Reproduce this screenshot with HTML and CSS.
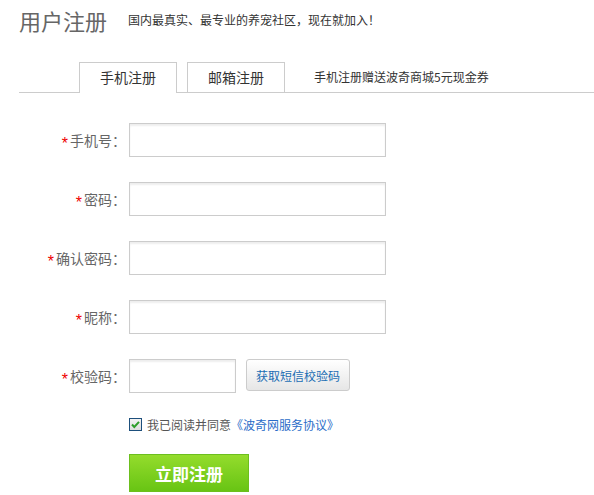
FILE: index.html
```html
<!DOCTYPE html>
<html lang="zh-CN">
<head>
<meta charset="utf-8">
<title>用户注册</title>
<link rel="stylesheet" href="styles.css">
</head>
<body>
<div class="page">
  <div class="header">
    <h1 class="title">用户注册</h1>
    <p class="subtitle">国内最真实、最专业的养宠社区，现在就加入！</p>
  </div>
  <div class="tabs">
    <div class="tab tab-active">手机注册</div>
    <div class="tab">邮箱注册</div>
    <div class="tab-note">手机注册赠送波奇商城5元现金券</div>
  </div>
  <form class="form">
    <div class="row">
      <label class="label"><span class="star">*</span>手机号：</label>
      <input class="field" type="text">
    </div>
    <div class="row">
      <label class="label"><span class="star">*</span>密码：</label>
      <input class="field" type="password">
    </div>
    <div class="row">
      <label class="label"><span class="star">*</span>确认密码：</label>
      <input class="field" type="password">
    </div>
    <div class="row">
      <label class="label"><span class="star">*</span>昵称：</label>
      <input class="field" type="text">
    </div>
    <div class="row">
      <label class="label"><span class="star">*</span>校验码：</label>
      <input class="field field-short" type="text">
      <button class="sms-btn" type="button">获取短信校验码</button>
    </div>
    <div class="agree">
      <span class="checkbox">
        <svg width="13" height="13" viewBox="0 0 13 13">
          <defs>
            <linearGradient id="cbg" x1="0" y1="0" x2="0" y2="1">
              <stop offset="0" stop-color="#f4f4f4"/>
              <stop offset="1" stop-color="#dcdcdc"/>
            </linearGradient>
          </defs>
          <rect x="0.5" y="0.5" width="12" height="12" fill="url(#cbg)" stroke="#1d4f7c"/>
          <path d="M3 6.5 L5.3 9 L10 3.8" fill="none" stroke="#2e9e2a" stroke-width="2"/>
        </svg>
      </span>
      <span class="agree-text">我已阅读并同意</span><a class="agree-link" href="#">《波奇网服务协议》</a>
    </div>
    <button class="submit" type="button">立即注册</button>
  </form>
</div>
</body>
</html>
```

FILE: styles.css
```css
html, body {
  margin: 0;
  padding: 0;
  background: #fff;
}
body {
  font-family: "Noto Sans CJK SC", "Liberation Sans", sans-serif;
  color: #666;
}
.page {
  width: 594px;
}
.header {
  display: flex;
  align-items: center;
  height: 40px;
  padding-left: 19px;
}
.title {
  margin: 0;
  font-size: 22px;
  font-weight: normal;
  color: #666;
  line-height: 40px;
}
.subtitle {
  margin: 0 0 0 21px;
  font-size: 12px;
  color: #333;
  line-height: 16px;
}
.tabs {
  margin-top: 22px;
  margin-left: 19px;
  height: 30px;
  padding-left: 60px;
  border-bottom: 1px solid #ccc;
  display: flex;
  align-items: flex-start;
}
.tab {
  box-sizing: border-box;
  width: 98px;
  height: 30px;
  border: 1px solid #ccc;
  border-bottom: none;
  font-size: 14px;
  color: #333;
  text-align: center;
  line-height: 28px;
  margin-right: 10px;
  background: #fff;
}
.tab-active {
  height: 31px;
  margin-bottom: -1px;
}
.tab-note {
  margin-left: 19px;
  font-size: 12px;
  color: #333;
  line-height: 30px;
}
.form {
  margin-top: 30px;
}
.row {
  display: flex;
  align-items: flex-start;
  height: 34px;
  margin-bottom: 25px;
}
.label {
  box-sizing: border-box;
  width: 129px;
  padding-right: 3px;
  text-align: right;
  font-size: 14px;
  line-height: 34px;
  color: #666;
  white-space: nowrap;
}
.star {
  color: #e00;
  font-family: "Liberation Sans", sans-serif;
  font-size: 16px;
  margin-right: 2px;
  vertical-align: -3px;
}
.field {
  box-sizing: border-box;
  width: 257px;
  height: 34px;
  margin: 0;
  border: 1px solid #ccc;
  box-shadow: inset 0 2px 2px rgba(0, 0, 0, 0.07);
  padding: 0 6px;
  font-size: 14px;
  outline: none;
  background: #fff;
}
.field-short {
  width: 107px;
}
.sms-btn {
  box-sizing: border-box;
  margin: 0 0 0 10px;
  width: 104px;
  height: 32px;
  border: 1px solid #ccc;
  border-radius: 3px;
  background: linear-gradient(#ffffff, #e6e6e6);
  color: #1b6db3;
  font-family: "Noto Sans CJK SC", sans-serif;
  font-size: 12px;
  padding: 0;
  cursor: pointer;
}
.agree {
  display: flex;
  align-items: center;
  margin-left: 129px;
  height: 14px;
  margin-top: -1px;
  font-size: 12px;
}
.checkbox {
  display: flex;
  width: 13px;
  height: 13px;
  margin-right: 5px;
}
.agree-text {
  color: #555;
}
.agree-link {
  color: #2a6cc8;
  text-decoration: none;
}
.submit {
  display: block;
  box-sizing: border-box;
  margin: 23px 0 0 129px;
  width: 120px;
  height: 38px;
  padding: 0;
  border: 1px solid #6cbf1e;
  background: linear-gradient(#94dc2c, #68c414);
  color: #fff;
  font-family: "Noto Sans CJK SC", sans-serif;
  font-size: 17px;
  font-weight: bold;
  letter-spacing: 0;
  cursor: pointer;
}
```
